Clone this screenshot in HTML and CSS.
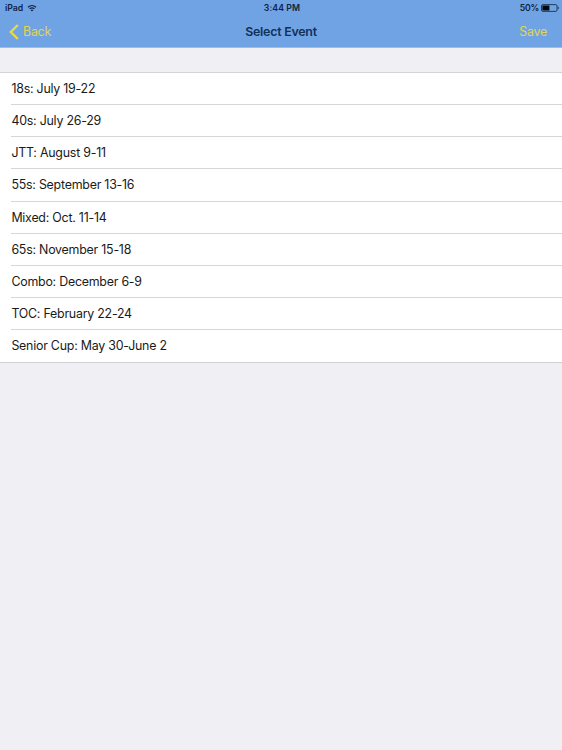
FILE: index.html
```html
<!DOCTYPE html>
<html lang="en">
<head>
    <meta charset="UTF-8">
    <meta name="viewport" content="width=device-width, initial-scale=1.0">
    <title>Select Event</title>
    <link rel="stylesheet" href="styles.css">
</head>
<body>

<header class="header">
    <div class="status-bar">
        <div class="status-left">
            <span class="device">iPad</span>
            <svg class="wifi" width="10" height="8" viewBox="0 0 10 8" fill="none" stroke="#10243f">
                <path d="M1 3.2C3.3 1 6.7 1 9 3.2" stroke-width="1.2"/>
                <path d="M2.6 4.9C4 3.6 6 3.6 7.4 4.9" stroke-width="1.2"/>
                <path d="M5 7.4L3.6 6C4.4 5.3 5.6 5.3 6.4 6Z" fill="#10243f" stroke="none"/>
            </svg>
        </div>
        <div class="time">3:44 PM</div>
        <div class="status-right">
            <span class="percent">50%</span>
            <svg class="battery" width="18" height="8" viewBox="0 0 18 8">
                <rect x="0.5" y="0.6" width="15.5" height="6.8" rx="1.3" fill="none" stroke="#10243f" stroke-width="0.8"/>
                <rect x="1.4" y="1.5" width="7" height="5" fill="#05080e"/>
                <path d="M16.8 2.6C18.1 3 18.1 5 16.8 5.4Z" fill="#10243f"/>
            </svg>
        </div>
    </div>
    <nav class="nav-bar">
        <a class="back">
            <svg width="10" height="16" viewBox="0 0 10 16" fill="none" stroke="#ecdb3c" stroke-width="2.3">
                <path d="M8.8 1L1.8 8L8.8 15"/>
            </svg>
            <span>Back</span>
        </a>
        <h1>Select Event</h1>
        <a class="save">Save</a>
    </nav>
</header>

<ul class="events">
    <li><span>18s: July 19-22</span></li>
    <li><span>40s: July 26-29</span></li>
    <li><span>JTT: August 9-11</span></li>
    <li><span>55s: September 13-16</span></li>
    <li><span>Mixed: Oct. 11-14</span></li>
    <li><span>65s: November 15-18</span></li>
    <li><span>Combo: December 6-9</span></li>
    <li><span>TOC: February 22-24</span></li>
    <li><span>Senior Cup: May 30-June 2</span></li>
</ul>

</body>
</html>
```
FILE: styles.css
```css
body {
    margin: 0;
    min-height: 100vh;
    background-color: #efeff4;
    font-family: Inter, Roboto, sans-serif;
    font-size: 12.4px;
    letter-spacing: -0.23px;
    color: #1a1a1a;
}
.header {
    box-sizing: border-box;
    height: 48px;
    background-color: #6fa3e3;
    border-bottom: 1px solid #a3bbdf;
}
.status-bar {
    display: grid;
    grid-template-columns: 1fr auto 1fr;
    align-items: center;
    height: 16px;
    padding: 0 3px 0 5px;
    font-size: 8.7px;
    font-weight: 600;
    letter-spacing: 0;
    color: #10243f;
}
.status-left, .status-right {
    display: flex;
    align-items: center;
}
.status-left {
    gap: 4px;
}
.status-right {
    justify-content: flex-end;
    gap: 2px;
}
.percent {
    letter-spacing: -0.2px;
}
.time {
    letter-spacing: 0.1px;
}
.nav-bar {
    display: grid;
    grid-template-columns: 1fr auto 1fr;
    align-items: center;
    height: 31px;
    padding: 0 15px 0 9px;
}
.nav-bar h1 {
    margin: 0 0 0 6px;
    font-size: 12.4px;
    font-weight: 600;
    color: #12305a;
}
.back {
    display: flex;
    align-items: center;
    gap: 4px;
    color: #e0d556;
}
.save {
    justify-self: end;
    color: #e0d556;
}
.events {
    list-style: none;
    margin: 24px 0 0;
    padding: 0;
    background-color: #ffffff;
    border-top: 1px solid #d3d2d8;
    border-bottom: 1px solid #d0cfd4;
}
.events li {
    box-sizing: border-box;
    height: 32.17px;
    margin-left: 11px;
    padding-left: 0.4px;
    border-bottom: 1px solid #d6d6d9;
    line-height: 31.4px;
}
.events li:last-child {
    height: 31.6px;
    border-bottom: none;
}
```
